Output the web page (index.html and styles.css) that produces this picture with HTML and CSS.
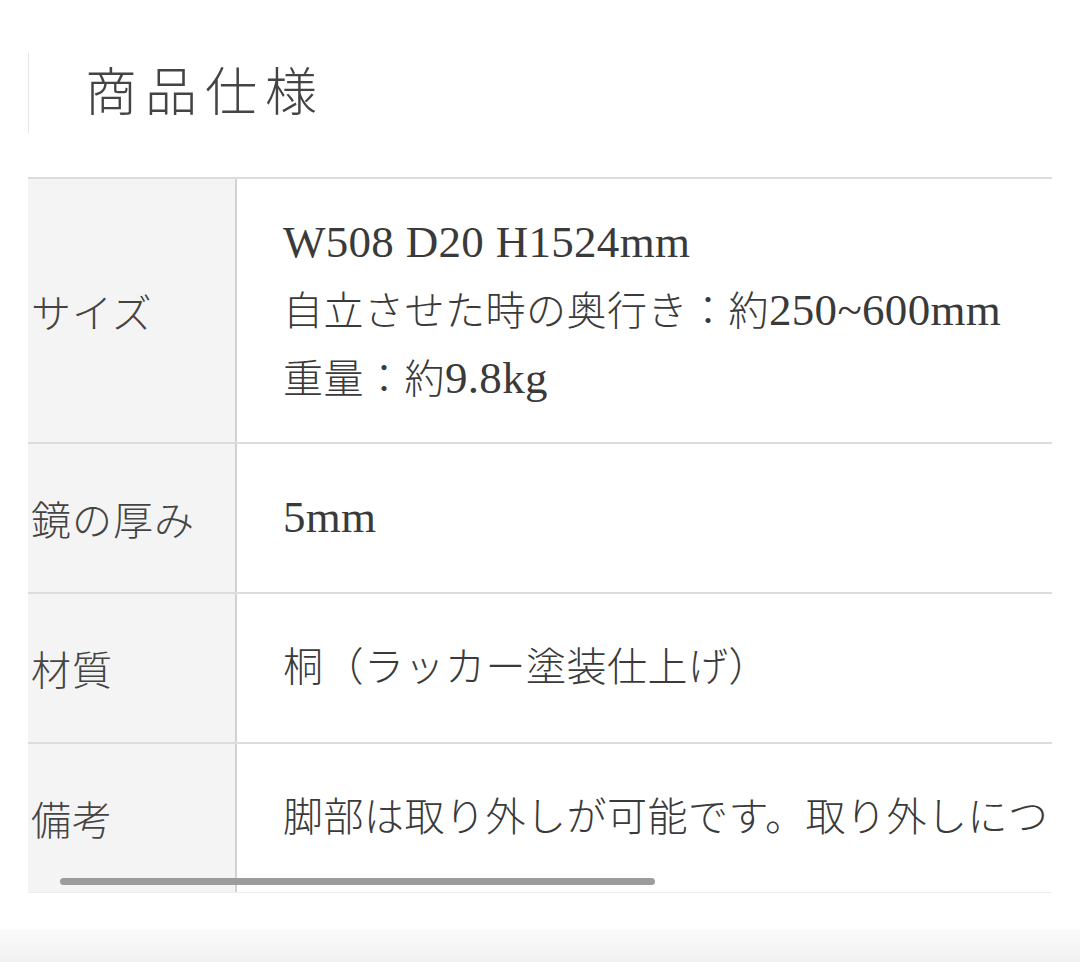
FILE: index.html
```html
<!DOCTYPE html>
<html lang="ja">
<head>
<meta charset="utf-8">
<title>商品仕様</title>
<link rel="stylesheet" href="styles.css">
</head>
<body>
<div class="page">
  <h2 class="heading">商品仕様</h2>
  <div class="table-wrap">
    <div class="spec">
      <div class="row row-tall">
        <div class="label">サイズ</div>
        <div class="value">
          <div><span class="en">W508 D20 H1524mm</span></div>
          <div>自立させた時の奥行き：約<span class="en">250~600mm</span></div>
          <div>重量：約<span class="en">9.8kg</span></div>
        </div>
      </div>
      <div class="row">
        <div class="label">鏡の厚み</div>
        <div class="value"><div><span class="en">5mm</span></div></div>
      </div>
      <div class="row">
        <div class="label">材質</div>
        <div class="value"><div>桐（ラッカー塗装仕上げ）</div></div>
      </div>
      <div class="row row-last">
        <div class="label">備考</div>
        <div class="value"><div>脚部は取り外しが可能です。取り外しについては取扱説明書をご確認ください。</div></div>
      </div>
    </div>
    <div class="scrollbar"></div>
  </div>
  <div class="after"></div>
  <div class="footer-band"></div>
</div>
</body>
</html>
```

FILE: styles.css
```css
html, body {
  margin: 0;
  padding: 0;
  background: #ffffff;
}

.page {
  padding-top: 53px;
  font-family: "Liberation Serif", "Noto Sans CJK JP", serif;
  color: #3a3a3a;
}

.heading {
  margin: 0 0 0 28px;
  box-sizing: border-box;
  height: 80px;
  border-left: 1px solid #e4e4e4;
  padding: 0 0 10px 56px;
  display: flex;
  align-items: center;
  font-size: 52px;
  font-weight: 300;
  letter-spacing: 8px;
  color: #444444;
}

.table-wrap {
  position: relative;
  margin: 44px 0 0 28px;
  width: 1024px;
  overflow: hidden;
  border-bottom: 1px solid #ececec;
}

.spec {
  display: flex;
  flex-direction: column;
}

.row {
  display: flex;
  box-sizing: border-box;
  height: 150px;
  border-top: 2px solid #dcdcdc;
}

.row-tall {
  height: 265px;
}

.label {
  flex: none;
  box-sizing: border-box;
  width: 209px;
  padding-left: 3px;
  background: #f4f4f4;
  border-right: 2px solid #d2d2d2;
  display: flex;
  align-items: center;
  font-size: 40px;
  font-weight: 300;
  letter-spacing: 1px;
  color: #444444;
}

.value {
  flex: none;
  padding-left: 46px;
  display: flex;
  flex-direction: column;
  justify-content: center;
  white-space: nowrap;
  font-size: 40px;
  font-weight: 300;
  letter-spacing: 0.5px;
  line-height: 66px;
  color: #3a3a3a;
}

.en {
  font-size: 45px;
  letter-spacing: 0.3px;
}

.scrollbar {
  position: absolute;
  left: 32px;
  bottom: 7px;
  width: 595px;
  height: 7px;
  border-radius: 4px;
  background: #9c9c9c;
}

.after {
  height: 36px;
  background: #ffffff;
}

.footer-band {
  height: 40px;
  background: linear-gradient(#fbfbfb, #efefef);
}
```
